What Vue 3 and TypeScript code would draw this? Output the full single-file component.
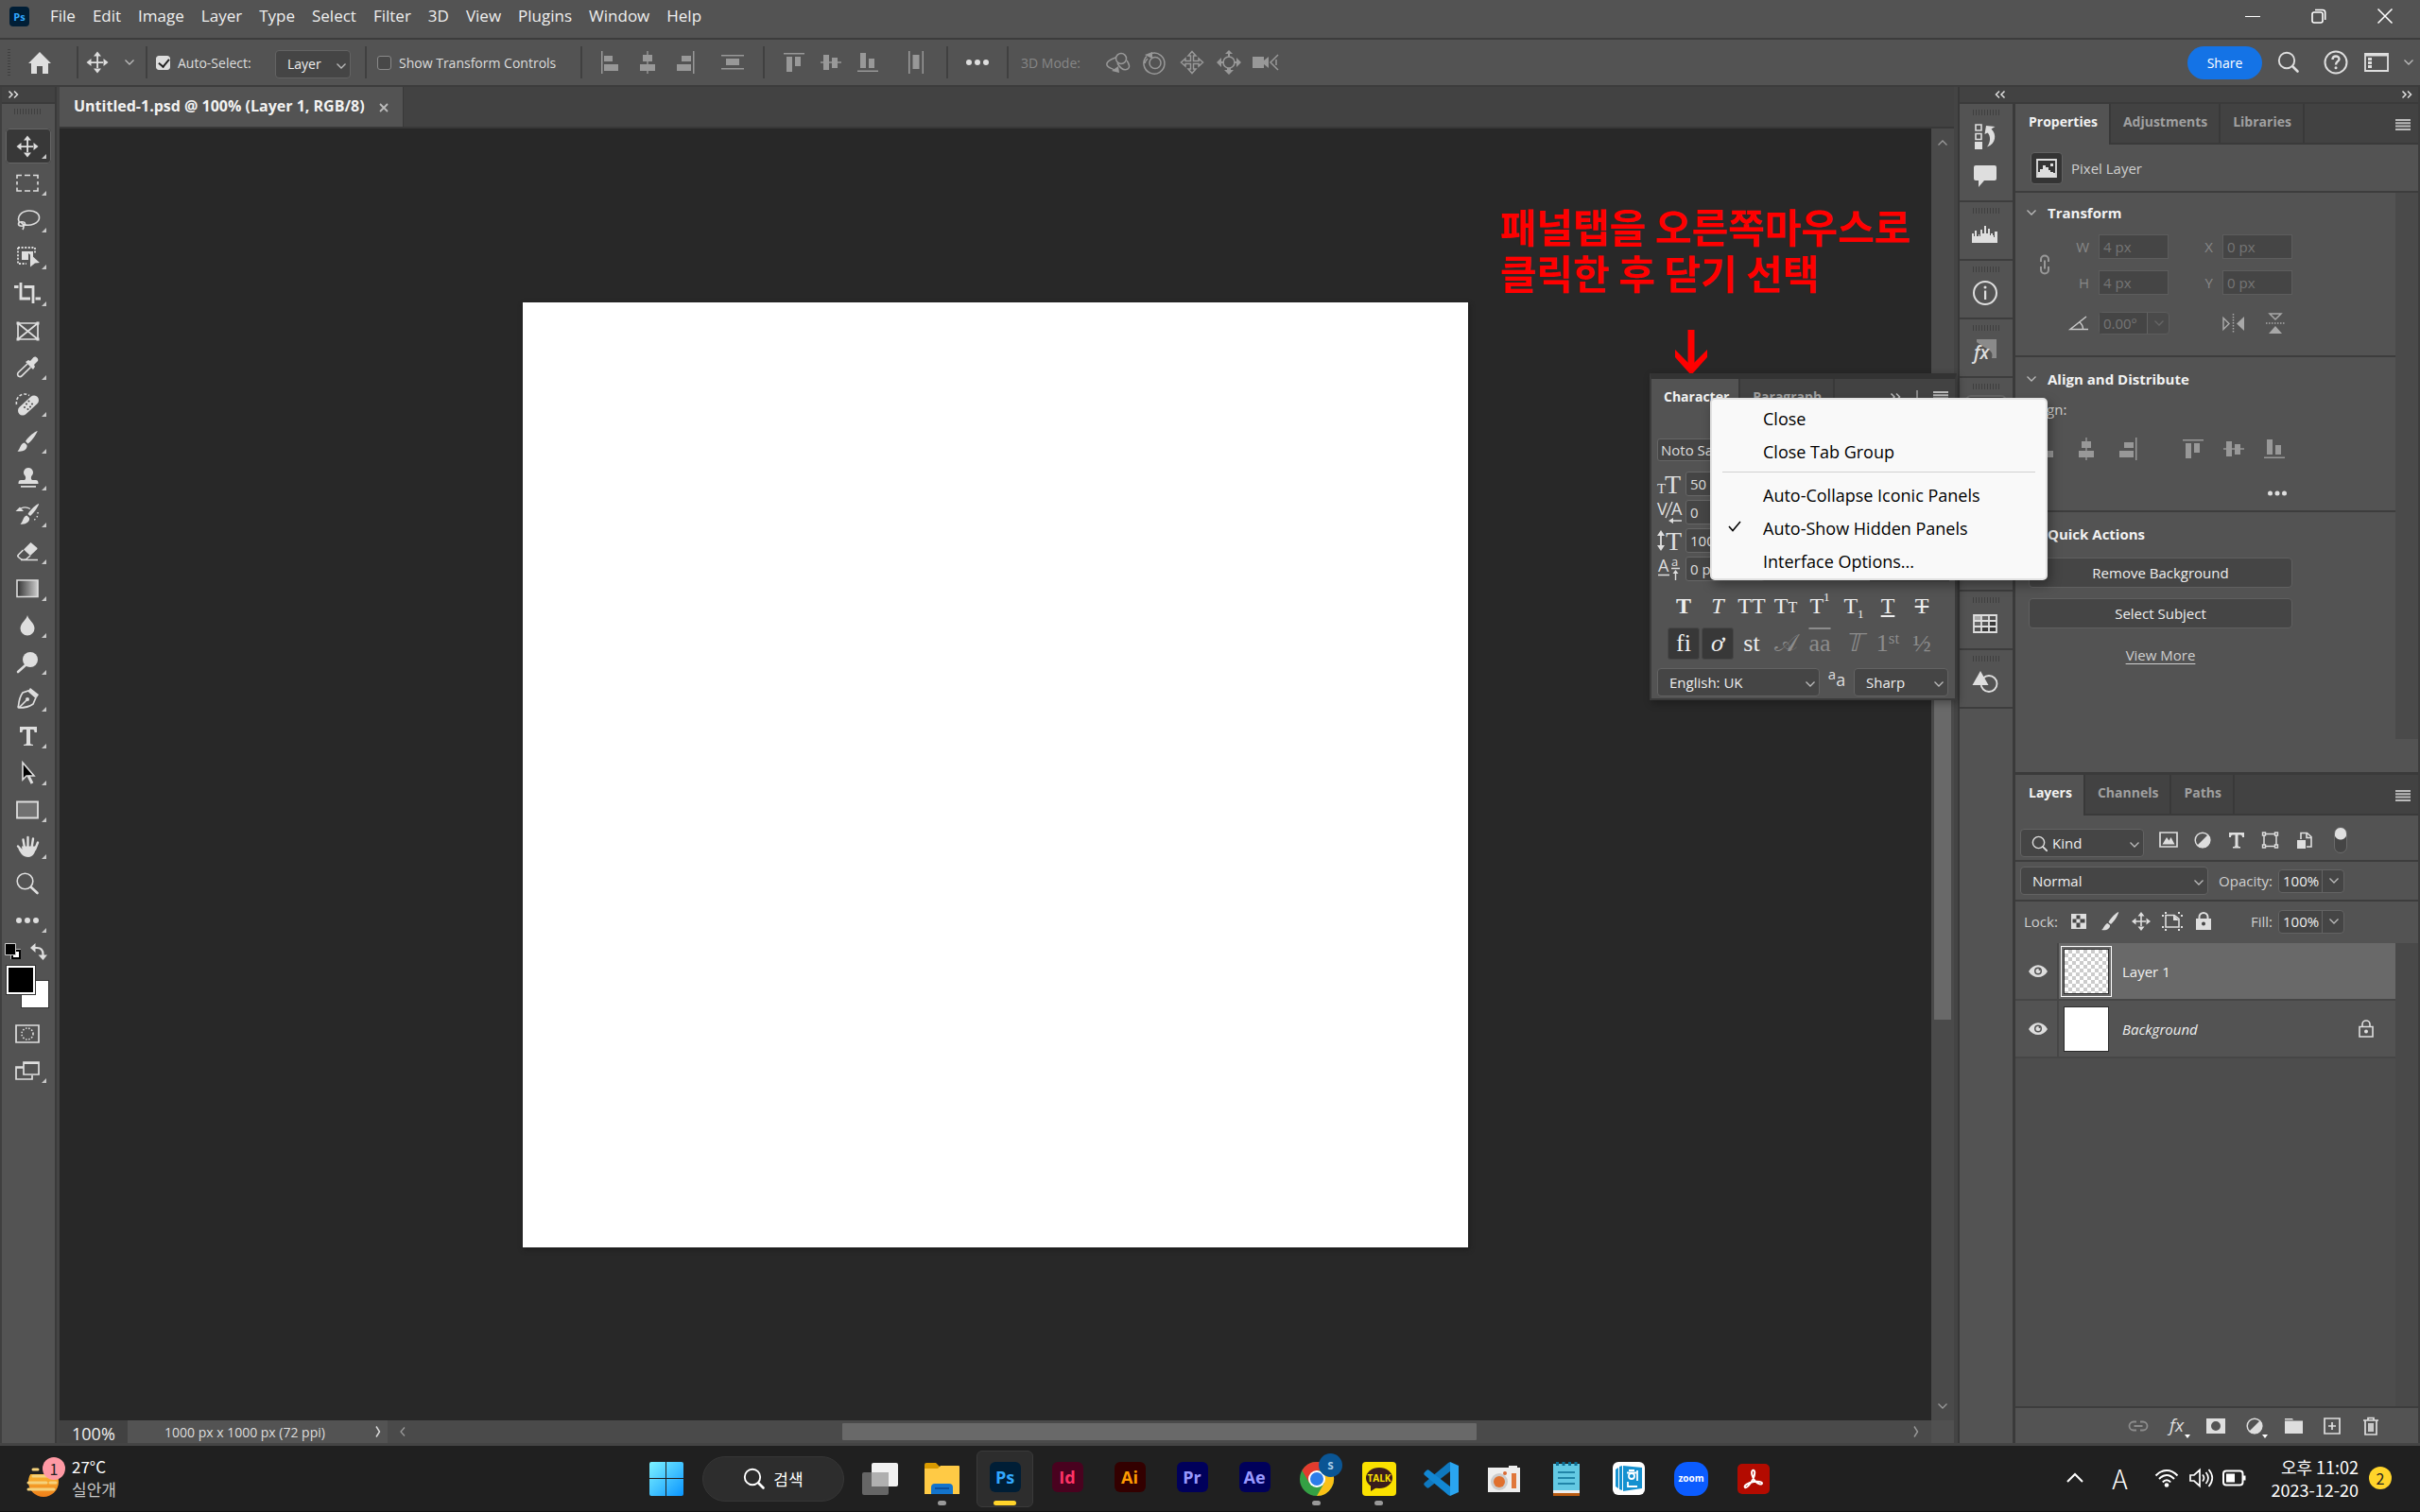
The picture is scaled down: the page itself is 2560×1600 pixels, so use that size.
<script setup lang="ts">
import { h, ref } from 'vue'

type IconDef = [number, number, string]

const S = 'fill="none" stroke="currentColor"'

const icons: Record<string, IconDef> = {
  // window and options bar
  home: [26, 24, '<path d="M13 1 25 13h-3v11h-6v-8h-6v8H4V13H1z"/>'],
  move: [28, 28, '<path d="M13.2 7h1.8v14h-1.8zM7 13.2h14V15H7zM14 2.500l4 5h-8zM14 25.500l4-5h-8zM2.500 14l5-4v8zM25.500 14l-5-4v8z"/>'],
  chev: [12, 8, `<path ${S} stroke-width="1.300" d="M1.500 1.500 6 6l4.500-4.500"/>`],
  chevUp: [12, 8, `<path ${S} stroke-width="1.300" d="M1.500 6.500 6 2l4.500 4.500"/>`],
  chevL: [8, 12, `<path ${S} stroke-width="1.300" d="M6 1.500 2 6l4 4.500"/>`],
  chevR: [8, 14, `<path ${S} stroke-width="1.400" d="M2 1.500 5.500 7 2 12.500"/>`],
  dblR: [12, 10, `<path ${S} stroke-width="1.500" d="M1.500 1.500 5 5 1.500 8.500M7 1.500 10.500 5 7 8.500"/>`],
  dblL: [12, 10, `<path ${S} stroke-width="1.500" d="M5 1.500 1.500 5 5 8.500M10.500 1.500 7 5l3.500 3.500"/>`],
  alL: [24, 24, '<path d="M2 0h1.500v24H2zM5 5h9v6H5zM5 14h15v7H5z"/>'],
  alC: [24, 24, '<path d="M11.300 0h1.400v24h-1.400zM7 4h10v7H7zM4 14h16v7H4z"/>'],
  alR: [24, 24, '<path d="M21 0h1.500v24H21zM9 5h10v6H9zM4 14h15v7H4z"/>'],
  dsV: [26, 24, '<path d="M1 4h24v1.600H1zM1 18h24v1.600H1zM6 8h14v7H6z"/>'],
  alT: [24, 24, '<path d="M1 2h22v1.600H1zM4 6h6v16H4zM13 6h6v10h-6z"/>'],
  alM: [24, 24, '<path d="M1 11.300h22v1.400H1zM4 4h6v16H4zM13 7h6v11h-6z"/>'],
  alB: [24, 24, '<path d="M1 20.500h22v1.600H1zM4 2h6v16H4zM13 8h6v10h-6z"/>'],
  dsH: [20, 24, '<path d="M2 0h1.600v24H2zM16.500 0H18v24h-1.500zM6.500 4h7v15h-7z"/>'],
  dots: [26, 8, '<circle cx="4" cy="4" r="3"/><circle cx="13" cy="4" r="3"/><circle cx="22" cy="4" r="3"/>'],
  dotsS: [22, 8, '<circle cx="3.500" cy="4" r="2.500"/><circle cx="11" cy="4" r="2.500"/><circle cx="18.500" cy="4" r="2.500"/>'],
  orbit: [28, 24, `<g ${S} stroke-width="1.500"><circle cx="17" cy="8" r="5.500"/><path d="M11 7C5 9 1 12 2 15c1 3 5 3 8 5M13 13c3 5 7 8 11 6 3-2 1-6-1-9"/></g><path d="m7 21 7-5 1 7z"/>`],
  roll: [26, 26, `<g ${S} stroke-width="1.500"><circle cx="13" cy="13.500" r="6"/><path d="M9 3.500a11 11 0 1 1-5 3M5 9a11 11 0 0 0-3 5"/></g><path d="M2 5 10 2v7z"/>`],
  pan: [26, 26, `<path ${S} stroke-width="1.500" d="m13 1.500 4 4.500h-2.500v5.500H20V9l4.500 4-4.500 4v-2.500h-5.500V20H17l-4 4.500L9 20h2.500v-5.500H6V17l-4.500-4L6 9v2.500h5.500V6H9z"/>`],
  slide: [28, 26, `<circle cx="14" cy="13" r="6" ${S} stroke-width="1.600"/><path d="m14 0 4 4h-3v3h-2V4h-3zM14 26l5-5h-3v-2h-4v2H9zM1 13l5-5v4h3v2H6v4zM27 13l-5-5v4h-3v2h3v4z"/>`],
  cam: [30, 24, `<path d="M1 6h12v4l5-4v12l-5-4v4H1z"/><path ${S} stroke-width="1.500" d="M28 4 20 12l8 8M26 9v6"/>`],
  search: [24, 24, `<circle cx="10" cy="10" r="8.200" ${S} stroke-width="1.900"/><path ${S} stroke-width="2.600" stroke-linecap="round" d="m16.500 16.500 5 5"/>`],
  help: [26, 26, `<circle cx="13" cy="13" r="11.500" ${S} stroke-width="2"/><path ${S} stroke-width="2.400" d="M9.500 10c0-4.500 7-4.500 7-.5 0 2.500-3.500 2.500-3.500 6"/><circle cx="13" cy="18.800" r="1.500"/>`],
  workspace: [26, 20, `<path ${S} stroke-width="1.800" d="M1 1h24v18H1z"/><path d="M1 1h24v2.500H1zM4 5h4v3H4zM4 9h4v3H4zM4 13h4v3H4z"/>`],
  min: [16, 16, '<path d="M0 8h16v1H0z"/>'],
  restore: [16, 16, `<g ${S} stroke-width="1.600"><rect x="1" y="4" width="11" height="11" rx="2"/><path d="M4 1.500h8q2.700 0 2.700 2.700V12"/></g>`],
  close: [16, 16, `<path ${S} stroke-width="1.500" d="m.5.5 15 15M15.500.5l-15 15"/>`],
  x: [10, 10, `<path ${S} stroke-width="1.800" d="m1 1 8 8M9 1 1 9"/>`],
  burger: [16, 12, '<path d="M0 0h16v2H0zM0 3.300h16v2H0zM0 6.600h16v2H0zM0 10h16v2H0z"/>'],
  // tools
  marquee: [28, 28, `<path ${S} stroke-width="1.600" d="M3 9V5.500h5M11 5.500h6M20 5.500h5V9M25 12v3.500M25 18.500v3.500h-5M17 22h-6M8 22H3v-3.500M3 15.500V12"/>`],
  lasso: [28, 28, `<g ${S} stroke-width="1.600"><path d="M6 17C2 11 7 4.500 15 4c7-.4 12 3 11.500 8-.6 5-9 9-17 6.500"/><ellipse cx="8" cy="18" rx="3.500" ry="2.200"/><path d="M7 16c3 2 4 5 2 8"/></g>`],
  objsel: [28, 28, `<path ${S} stroke-width="1.800" stroke-dasharray="2 1.600" d="M4 4h18v6M4 4v17h9"/><path d="M8 8h12v6l-5-4v7H8zM17 11l10 9-5 .5-5 4z"/>`],
  crop: [28, 28, `<path ${S} stroke-width="2.800" d="M7 2v17h10M10.500 6.500H20V24"/><path d="M0 5h4.500v3H0zM22.500 17.500H28v3h-5.500z"/>`],
  frame: [28, 28, `<path ${S} stroke-width="1.700" d="M4 6h21v17H4zM4 6l21 17M25 6 4 23"/><path d="M2.500 4.500h3v3h-3zM23.500 4.500h3v3h-3zM2.500 21.500h3v3h-3zM23.500 21.500h3v3h-3z"/>`],
  dropper: [28, 28, `<path ${S} stroke-width="1.700" d="m14 10-9.500 9c-1.500 1.500-1 4 1 4.500 1 .3 2-.1 2.700-.8L17.500 13.500"/><path d="m12 8 3-2 2 1 3.500-4c2-2 6 1.500 4.500 4L21 11l1 2-2 3z"/>`],
  heal: [28, 28, `<path stroke="currentColor" fill="none" stroke-width="10" stroke-linecap="round" d="m9 20.500 12-11"/><path ${S} stroke-width="1.600" stroke-dasharray="3 2" d="M2.500 14C1 6 9 0 16 4.500"/><g fill="#535353"><circle cx="13" cy="13.500" r="1.100"/><circle cx="17" cy="16.500" r="1.100"/><circle cx="11" cy="17" r="1.100"/><circle cx="14.500" cy="19" r="1.100"/><circle cx="15.500" cy="10.500" r="1.100"/><circle cx="19" cy="13.500" r="1.100"/></g>`],
  brush: [28, 28, '<path d="M24.500 3c1 0-5 10-10 13.500L12 14C15 9 22 3.500 24.500 3zM11 15.500l2.500 2.500c1 5-5 7.500-10 6.500 3-2 2.500-8 7.500-9z"/>'],
  stamp: [28, 28, '<path d="M15 3a5 5 0 0 1 3.500 8.500c-1 1.200-.8 3.500.5 4.500h4c2 0 2.500 1.500 2.500 4h-21c0-2.500.5-4 2.500-4h4c1.300-1 1.500-3.300.5-4.500A5 5 0 0 1 15 3zM7 22h16v1.800H7z"/>'],
  history: [28, 28, `<path d="M26 2c1 0-4 9-9 13l-2.500-2C17.500 8 23.500 2.500 26 2zM13.500 14.500l2.500 2.500c1 4.500-4.500 7.500-9.500 6.500 3-2 2.500-8 7-9zM1.500 10 6 5.500l4 4.500z"/><path ${S} stroke-width="1.300" d="M7 7c3-1.500 7-1.500 10 .5"/><path ${S} stroke-width="1.400" stroke-dasharray="1.500 2.500" d="M25 11c.5 4-2 8-6 9.500"/>`],
  eraser: [28, 28, `<path d="M17.500 4 24 9.500c.8.700.5 1.500 0 2L17 18l-7-6.500z"/><path ${S} stroke-width="1.600" d="m9.500 12-5 5c-1 1-1 1.500 0 2.500l2.500 2c1 1 5 .8 6 0l4-3.500M7 22.500h18"/>`],
  gradient: [28, 28, '<defs><linearGradient id="tg"><stop stop-color="#333"/><stop offset="1" stop-color="#ccc"/></linearGradient></defs><path fill="url(#tg)" stroke="currentColor" stroke-width="1.600" d="M3 5h22v17.500H3z"/>'],
  drop: [28, 28, '<path d="M14 3c1 5 7.500 8 7.500 14a7.500 7.500 0 0 1-15 0C6.500 11 13 8 14 3z"/>'],
  dodge: [28, 28, `<circle cx="17" cy="11" r="8"/><path ${S} stroke-width="2.600" stroke-linecap="round" d="m4 24 9-8"/>`],
  pen: [28, 28, `<path ${S} stroke-width="1.700" d="M15 5 23 12 20 19c-4 3-9 4-15 4-1 0-1-1-.5-2C5 16 6 11 9 7zM5 23l8-8"/><circle cx="14" cy="14" r="2"/><path d="m17 2 9 7-2 3-9-7z"/>`],
  type: [28, 28, '<path d="M6 4h18v6h-2.500c0-2-.5-3-2-3H17v14c0 1.500 1 1.500 3 2v1H10v-1c2-.5 3-.5 3-2V7h-2.500c-1.500 0-2 1-2 3H6z"/>'],
  arrow: [28, 28, '<path fill="#000" stroke="currentColor" stroke-width="1.600" d="M9 3v18l4-4h8z"/><path stroke="currentColor" stroke-width="3" d="m15 17 4 8"/>'],
  rect: [28, 28, '<path fill="#717171" stroke="currentColor" stroke-width="1.800" d="M3 5.500h22v17H3z"/>'],
  hand: [28, 28, `<path ${S} stroke-width="2.400" stroke-linecap="round" d="M4 13.500 8 18M9.500 6.500 11 15M14.500 4v11M20 5.500 18.500 15M25 9.500 22 17"/><path d="M8 13.500h15c0 6-3 11.500-8 11.500-6 0-8-4-10.500-8.500l1-1 3 2z"/>`],
  zoomT: [28, 28, `<circle cx="11.500" cy="11.500" r="8.300" ${S} stroke-width="1.600"/><path ${S} stroke-width="2.600" stroke-linecap="round" d="m18 18 6.500 6"/>`],
  more: [28, 28, '<circle cx="5" cy="14" r="3"/><circle cx="14" cy="14" r="3"/><circle cx="23" cy="14" r="3"/>'],
  defCol: [18, 18, '<path fill="#fff" stroke="#bbb" d="M6.500 6.500h10v10h-10z"/><path fill="none" stroke="#000" stroke-width="2" d="M8 8h8v8H8z"/><path fill="#000" stroke="#ccc" d="M.5.5h11v12H.5z"/>'],
  swap: [18, 18, `<path ${S} stroke-width="2.200" d="M4 5h3c4 0 6.500 2.500 6.500 7v1"/><path d="M0 5l5.500-5v10zM13.500 18l-5-5.500h9.500z"/>`],
  mask: [28, 22, `<path ${S} stroke-width="1.700" d="M2 2h24v18H2z"/><circle cx="14" cy="11" r="6" ${S} stroke-width="1.600" stroke-dasharray="1.500 1.700"/>`],
  screen: [28, 22, `<path ${S} stroke-width="1.700" d="M10 7H2v13h17v-4M10 2h16v13H10zM2 8h8"/><path d="M10 2h16v2H10z"/>`],
  // dock icons
  dHist: [26, 28, `<path ${S} stroke-width="1.600" d="M3 2h6v6H3zM3 11.500h6v6H3z"/><path d="M2 20h8v8H2zM14 3l9.500 1-4 2.500c6 5 5 16-4.500 19 4-5 4-12 .5-15l-3 1.500z"/>`],
  dNote: [26, 26, '<path d="M3 1h20q2 0 2 2v12q0 2-2 2H12l-6 7v-7H3q-2 0-2-2V3q0-2 2-2z"/>'],
  dHisto: [28, 18, '<path d="M0 18V8h2v3h1V5h2v6h2V9h1v2h1V4h2v4h2V0h2v8h2V3h2v7h1V8h2v2h1v2h1V6h3v12z"/>'],
  dInfo: [28, 28, `<circle cx="14" cy="14" r="12" ${S} stroke-width="2"/><path d="M13 11.500h2.200V21H13z"/><circle cx="14" cy="8" r="1.500"/>`],
  dFx: [28, 28, '<path fill="#8a8a8a" d="M5 1h21v20h-5c2-7-3-9-7-11L5 4z"/><text x="2" y="22" font-family="Open Sans, sans-serif" font-style="italic" font-weight="600" font-size="19">fx</text>'],
  dGrid: [26, 20, `<path fill="#aaa" d="M1 1h8v6H1z"/><path fill="#666" d="M9 1h8v6H9zM1 7h8v6H1z"/><path fill="#383838" d="M17 7h8v12H9v-6h8z"/><path ${S} stroke-width="1.800" d="M1 1h24v18H1zM9 1v18M17 1v18M1 7h24M1 13h24"/>`],
  dShape: [28, 24, `<circle cx="18" cy="13.500" r="8.500" ${S} stroke-width="1.800"/><path d="m9 0 8.500 15H.5z"/>`],
  dChar: [28, 28, `<path ${S} stroke-width="2" d="M2 26 10 4l8 22M5 18h10M22 0v28"/>`],
  // panels
  pixel: [22, 20, `<path ${S} stroke-width="1.800" d="M1 1h20v18H1z"/><path d="M2 18v-4h2v-3h3V7h3v2h3v3h2v2h3v1h2v3zM15 5h3v3h-3z"/>`],
  link: [14, 24, `<path ${S} stroke-width="2" d="M3 9V6.500a4 4 0 0 1 8 0V9M3 14v3.500a4 4 0 0 0 8 0V14M7 7.500v9"/>`],
  angle: [22, 16, `<path ${S} stroke-width="1.500" d="M19 1 2 14.500h19M12 7c2.500 2 3.500 5 3.500 7.500"/>`],
  flipH: [26, 20, `<path ${S} stroke-width="1.500" d="M2 4.500v12L8 10.500z"/><path d="M24 3v15l-8-7.500z"/><path ${S} stroke-width="1.500" stroke-dasharray="1.500 1.500" d="M12.500 0v20"/>`],
  flipV: [22, 24, `<path ${S} stroke-width="1.500" d="M5 2h12l-6 6z"/><path d="m11 15 7 8H4z"/><path ${S} stroke-width="1.500" stroke-dasharray="1.500 1.500" d="M1 12h20"/>`],
  fPix: [20, 18, `<path ${S} stroke-width="1.700" d="M1 1h18v15H1z"/><path d="M3.500 13.500 8 6l2.500 3.500L12.500 6l4 7.500z"/>`],
  fAdj: [18, 18, `<circle cx="9" cy="9" r="7.800" ${S} stroke-width="1.500"/><path d="M14.800 3.200A8.200 8.200 0 0 1 3.200 14.800z"/>`],
  fType: [18, 18, '<path d="M1 1h16v5h-2c0-1.500-.5-2.500-2-2.500h-2.500v11c0 1.500 1 1.500 2.500 1.500v1.500H5V16c1.500 0 2.500 0 2.500-1.500v-11H5C3.500 3.500 3 4.500 3 6H1z"/>'],
  fShape: [20, 18, `<path ${S} stroke-width="1.500" d="M3 2.500h13v13H3z"/><path fill="#535353" stroke="currentColor" stroke-width="1.400" d="M1.500 1h3v3h-3zM14.500 1h3v3h-3zM1.500 14h3v3h-3zM14.500 14h3v3h-3z"/>`],
  fSmart: [18, 18, `<path ${S} stroke-width="1.600" d="M5 8V1.500h6.500l4.500 4V16h-5M11 1.500v5h5"/><path d="M1 9h9v9H1z"/>`],
  lTrans: [18, 18, '<path d="M1 1h16v16H1z"/><path fill="#444" d="M6.500 2.500h4v4h-4zM2.500 6.500h4v4h-4zM10.500 6.500h5v4h-5zM6.500 10.500h4v5h-4z"/>'],
  lBrush: [20, 20, '<path d="M19 0c1 0-3 9-8 13L8.500 11C11 6 17 .5 19 0zM7.500 12l2.500 2c.5 4-4 6-9 5 2.500-1 3-6 6.500-7z"/>'],
  lMove: [20, 20, '<path d="M9.200 4h1.600v12H9.200zM4 9.200h12v1.600H4zM10 0l3.500 4.500h-7zM10 20l3.500-4.500h-7zM0 10l4.500-3.500v7zM20 10l-4.500-3.500v7z"/>'],
  lBoard: [22, 20, `<path ${S} stroke-width="1.600" d="M4 3.500h9l5 4V16H4z"/><path d="M12 3v6h6zM3 0h2v2H3zM0 3h2v2H0zM17 0h2v2h-2zM20 3h2v2h-2zM3 18h2v2H3zM0 15h2v2H0zM17 18h2v2h-2zM20 15h2v2h-2z"/>`],
  lLock: [16, 20, `<path d="M0 7h16v12H0z"/><path ${S} stroke-width="2" d="M3.500 8V5.500a4.500 4.500 0 0 1 9 0V8"/><circle cx="8" cy="12.500" r="2" fill="#444"/>`],
  eye: [20, 14, '<path d="M0 7c5-9 15-9 20 0-5 8-15 8-20 0z"/><circle cx="10" cy="6.500" r="4" fill="#535353"/><circle cx="10" cy="6.500" r="2.500"/><circle cx="11.500" cy="5" r="1" fill="#535353"/>'],
  lockO: [16, 20, `<path ${S} stroke-width="1.600" d="M1 7.500h14v10.500H1zM4 7.500V5a4 4 0 0 1 8 0v2.500"/><circle cx="8" cy="12.500" r="2"/>`],
  bLink: [22, 12, `<path ${S} stroke-width="1.800" d="M9 1.500H6a4.500 4.500 0 0 0 0 9h3M13 1.500h3a4.500 4.500 0 0 1 0 9h-3M6.500 6h9"/>`],
  bMask: [20, 16, '<path fill-rule="evenodd" d="M0 0h20v16H0zM10 3a5 5 0 1 0 0 10 5 5 0 0 0 0-10z"/>'],
  bFolder: [20, 16, '<path d="M1 0h8l1 1.500H1zM1 2.500h19V16H1z"/>'],
  bNew: [18, 18, `<path ${S} stroke-width="1.700" d="M1 1h16v16H1zM9 5v8M5 9h8"/>`],
  bTrash: [18, 20, `<path ${S} stroke-width="1.700" d="M1 4h16M6 4V1.500h6V4M3 4v15h12V4M7 7v9M9 7v9M11 7v9"/>`],
  // character panel
  cSize: [26, 22, '<g font-family="Liberation Serif, serif"><text x="0" y="21" font-size="15">T</text><text x="8" y="21" font-size="28">T</text></g>'],
  cTrack: [28, 24, `<g font-family="Open Sans, sans-serif" font-size="18"><text x="0" y="15">V</text><text x="15" y="15">A</text></g><path ${S} stroke-width="1.400" d="M16 1 9 18M14 21h12"/><path d="m12 21 5-3v6z"/>`],
  cVert: [28, 22, `<text x="9" y="21" font-size="28" font-family="Liberation Serif, serif">T</text><path ${S} stroke-width="1.800" d="M4 4v14"/><path d="m4 0 4 6H0zM4 22l4-6H0z"/>`],
  cBase: [26, 24, `<g font-family="Open Sans, sans-serif"><text x="1" y="15" font-size="18">A</text><text x="15" y="9" font-size="13">a</text></g><path ${S} stroke-width="1.400" d="M1 18.500h12M15 11.500h9M19.500 15v9"/><path d="m19.500 13 3 4h-6z"/>`],
  check: [14, 12, `<path ${S} stroke-width="1.500" d="m1 6 4 4.500 8-9.500"/>`],
  // taskbar
  win: [36, 36, '<defs><linearGradient id="wg" x2="1" y2="1"><stop stop-color="#7df3ff"/><stop offset="1" stop-color="#0a95ff"/></linearGradient></defs><path fill="url(#wg)" d="M2 0h15v17H0V2q0-2 2-2zM18 0h16q2 0 2 2v15H18zM0 18h17v18H2q-2 0-2-2zM18 18h18v16q0 2-2 2H18z"/>'],
  tview: [38, 34, '<rect y="10" width="28" height="24" rx="2" fill="#666"/><rect x="10" width="28" height="25" rx="2" fill="#f2f2f2"/><path fill="#b0b0b0" d="M10 10h18v15H10z"/>'],
  folder: [38, 34, '<path fill="#d99a00" d="M2 0h10l4 4v8H0V2q0-2 2-2z"/><path fill="#ffca45" d="M0 6h14l3-3h19q1 0 1 1v29H0z"/><path fill="#1374cc" d="M7 33v-7q0-4 4-4h15q4 0 4 4v7z"/><path fill="#0b4f9c" d="M11 26h15v2H11z"/>'],
  chrome: [36, 36, '<circle cx="18" cy="18" r="18" fill="#34a044"/><path fill="#e33b2e" d="M2.400 9A18 18 0 0 1 33.600 9H18L10 22z"/><path fill="#fbc116" d="M33.600 9A18 18 0 0 1 18 36l8-14V9z"/><circle cx="18" cy="18" r="9" fill="#fff"/><circle cx="18" cy="18" r="7" fill="#2b7de9"/>'],
  talk: [36, 36, '<rect width="36" height="36" rx="4" fill="#fae100"/><ellipse cx="18" cy="17" rx="14" ry="11" fill="#3a1d1d"/><path fill="#3a1d1d" d="M9 24v7l8-5z"/><text x="18" y="21" text-anchor="middle" font-family="Open Sans, sans-serif" font-weight="700" font-size="10" fill="#fae100">TALK</text>'],
  vscode: [36, 36, '<path fill="#0f78bf" d="M27 0v10L5 27c-1 1-2 1-3 0l-2-2c-1-1-1-2 0-3L25 1z"/><path fill="#1287d3" d="m27 36-2-1L0 14c-1-1-1-2 0-3l2-2c1-1 2-1 3 0l22 17z"/><path fill="#2aa5f0" d="m27 0 9 4v28l-9 4z"/>'],
  cap: [34, 28, '<path fill="#eee" d="M0 2h22V0h9v2h3v26H0z"/><circle cx="12" cy="17" r="9" fill="#ccc"/><circle cx="12" cy="17" r="6" fill="#e0702e"/><circle cx="18" cy="8" r="2" fill="#d86b35"/><path fill="#e0783c" d="M25 8h5v16h-5z"/>'],
  note: [30, 36, '<path fill="#63c9e3" d="M1 2h28v28H1z"/><path fill="#eee" d="M1 30h28v3H1z"/><path fill="#b85a10" d="M1 33h28v3H1z"/><g stroke="#0c6f95" stroke-width="1.600"><path d="M6 11h18M6 17h18M6 23h18"/><path stroke-width="3" d="M5.500 0v4M12 0v4M18.500 0v4M25 0v4"/></g>'],
  hwp: [36, 36, `<rect x="1" width="34" height="35" rx="6" fill="#fff"/><path fill="#1591d0" d="m4 8 3-2v22l-3-2zM8 5l3-1v26l-3-1zM12 4l20 2v22l-20 3z"/><g fill="none" stroke="#fff" stroke-width="1.800"><circle cx="21" cy="15" r="3"/><path d="M18 9h6M16 11.500h10M27 9v11M17 21v5h10"/></g>`],
  zoomA: [36, 36, '<rect width="36" height="36" rx="14" fill="#0b5cff"/><text x="18" y="21" text-anchor="middle" font-family="Open Sans, sans-serif" font-weight="700" font-size="10" fill="#fff">zoom</text>'],
  pdf: [34, 32, '<rect width="34" height="32" rx="5" fill="#b30b00"/><path fill="none" stroke="#fff" stroke-width="2" d="M16 7c3-1 3 4 0 10-3 5-6 9-8 8-2-2 4-5 9-6 5-.8 9 0 9 1.500 0 2-5 1-8-3-2.500-4-4-9-2-10.500z"/>'],
  weather: [36, 36, '<defs><linearGradient id="sg" x2="0" y2="1"><stop stop-color="#fcc73a"/><stop offset="1" stop-color="#ef7f1a"/></linearGradient></defs><circle cx="18" cy="18" r="16" fill="url(#sg)"/><path fill="#202020" d="M0 0h36v10H0z"/><path stroke="#f5d27c" stroke-width="3" stroke-linecap="round" d="M7 5h5M7 12h28M2 19h19M25 19h6M2 26h27"/>'],
  up: [18, 12, `<path ${S} stroke-width="2" d="m1 10 8-8 8 8"/>`],
  wifi: [26, 20, `<path ${S} stroke-width="2" d="M1.500 7.500c7-7.500 16-7.500 23 0M5 11c5-5.500 11-5.500 16 0M8.800 14.500c2.500-3 6-3 8.400 0"/><circle cx="13" cy="17.500" r="2.300"/>`],
  vol: [26, 20, `<path ${S} stroke-width="1.700" d="M2 7h4l6-5.500v17L6 13H2zM15 6.500q3 3.500 0 7M18.500 4q5 6 0 12M21.500 1q7.500 9 0 18"/>`],
  bat: [26, 18, `<rect x="1" y="1.500" width="20.500" height="15" rx="3" ${S} stroke-width="2"/><path d="M4 4.500h9v9H4zM22 6.500h2.500v5H22z"/>`],
  redArrow: [34, 48, `<path ${S} stroke-width="7" d="M17 0v42"/><path d="m17 48-17-19v-8l17 17 17-17v8z"/>`],
}

const Ic = (p: { n: string }) => {
  const [w, ht, markup] = icons[p.n]
  return h('svg', { width: w, height: ht, viewBox: `0 0 ${w} ${ht}`, fill: 'currentColor', 'aria-hidden': 'true', innerHTML: markup })
}
Ic.props = ['n']

const menus = ['File', 'Edit', 'Image', 'Layer', 'Type', 'Select', 'Filter', '3D', 'View', 'Plugins', 'Window', 'Help']
const tools = ['move', 'marquee', 'lasso', 'objsel', 'crop', 'frame', 'dropper', 'heal', 'brush', 'stamp', 'history', 'eraser',
  'gradient', 'drop', 'dodge', 'pen', 'type', 'arrow', 'rect', 'hand', 'zoomT', 'more']
const noFlyout = ['frame', 'zoomT']
const dock = [['dHist', 'dNote'], ['dHisto'], ['dInfo'], ['dFx']]
const fields = [
  { icon: 'cSize', label: 'Font size', value: '50 px' },
  { icon: 'cTrack', label: 'Tracking', value: '0' },
  { icon: 'cVert', label: 'Vertical scale', value: '100%' },
  { icon: 'cBase', label: 'Baseline shift', value: '0 px' },
]
const autoSelect = ref(true)
const showTransform = ref(false)
const adobe = [
  { t: 'Ps', bg: '#001e36', fg: '#31a8ff', on: true },
  { t: 'Id', bg: '#49021f', fg: '#ff3366' },
  { t: 'Ai', bg: '#330000', fg: '#ff9a00' },
  { t: 'Pr', bg: '#00005b', fg: '#9999ff' },
  { t: 'Ae', bg: '#00005b', fg: '#9999ff' },
]
const apps = ['vscode', 'cap', 'note', 'hwp', 'zoomA', 'pdf']
</script>

<template>
  <div class="screen">
    <header class="menubar">
      <span class="ps-mini">Ps</span>
      <nav class="menus"><button v-for="m in menus" :key="m">{{ m }}</button></nav>
      <div class="winctl">
        <button aria-label="Minimize"><Ic n="min" /></button>
        <button aria-label="Restore"><Ic n="restore" /></button>
        <button aria-label="Close window"><Ic n="close" /></button>
      </div>
    </header>

    <div class="options">
      <i class="vgrip"></i>
      <button class="home" aria-label="Home"><Ic n="home" /></button>
      <i class="vsep"></i>
      <button class="movebtn" aria-label="Move tool"><Ic n="move" /><Ic n="chev" /></button>
      <i class="vsep"></i>
      <label class="chk c1"><input v-model="autoSelect" type="checkbox" />Auto-Select:</label>
      <span class="sel s-layer"><select aria-label="Auto-select target"><option>Layer</option></select><Ic n="chev" /></span>
      <i class="vsep"></i>
      <label class="chk c2"><input v-model="showTransform" type="checkbox" />Show Transform Controls</label>
      <i class="vsep"></i>
      <div class="algroup g1">
        <button aria-label="Align left edges"><Ic n="alL" /></button>
        <button aria-label="Align horizontal centers"><Ic n="alC" /></button>
        <button aria-label="Align right edges"><Ic n="alR" /></button>
        <button class="wide" aria-label="Distribute vertically"><Ic n="dsV" /></button>
      </div>
      <i class="vsep"></i>
      <div class="algroup g2">
        <button aria-label="Align top edges"><Ic n="alT" /></button>
        <button aria-label="Align vertical centers"><Ic n="alM" /></button>
        <button aria-label="Align bottom edges"><Ic n="alB" /></button>
        <button class="wide" aria-label="Distribute horizontally"><Ic n="dsH" /></button>
      </div>
      <i class="vsep"></i>
      <button class="optmore" aria-label="More align options"><Ic n="dots" /></button>
      <i class="vsep"></i>
      <span class="mode3d">3D Mode:</span>
      <div class="algroup">
        <button v-for="n in ['orbit', 'roll', 'pan', 'slide', 'cam']" :key="n" :aria-label="n"><Ic :n="n" /></button>
      </div>
      <div class="optright">
        <button class="share">Share</button>
        <button class="wsearch" aria-label="Search"><Ic n="search" /></button>
        <button aria-label="Help"><Ic n="help" /></button>
        <button aria-label="Workspace"><Ic n="workspace" /></button>
        <button class="wchev" aria-label="Workspace menu"><Ic n="chev" /></button>
      </div>
    </div>

    <main class="work">
      <aside class="tools">
        <div class="strip"><Ic n="dblR" /></div>
        <i class="hgrip"></i>
        <div class="toollist">
          <button v-for="t in tools" :key="t" :class="{ active: t === 'move' }" :aria-label="t">
            <Ic :n="t" /><i v-if="!noFlyout.includes(t)" class="fly"></i>
          </button>
        </div>
        <div class="colrow"><Ic n="defCol" /><Ic n="swap" /></div>
        <div class="swatches"><i class="bg"></i><i class="fg"></i></div>
        <button class="tl" aria-label="Quick mask"><Ic n="mask" /></button>
        <button class="tl" aria-label="Screen mode"><Ic n="screen" /><i class="fly"></i></button>
      </aside>

      <section class="doc">
        <div class="doctabs"><div class="doctab"><span>Untitled-1.psd @ 100% (Layer 1, RGB/8)</span><button aria-label="Close document"><Ic n="x" /></button></div></div>
        <div class="stage">
          <div class="canvas"><div class="artboard"></div></div>
          <div class="vscroll"><Ic n="chevUp" /><i class="vthumb"></i><Ic n="chev" /></div>
        </div>
        <div class="status">
          <input class="zoomin" aria-label="Zoom" value="100%" />
          <div class="info"><span>1000 px x 1000 px (72 ppi)</span><Ic n="chevR" /></div>
          <div class="hscroll"><Ic n="chevL" /><i class="hthumb"></i><Ic class="hr" n="chevR" /></div>
          <i class="corner"></i>
        </div>
      </section>

      <section class="dock">
        <div class="strip dstrip"><Ic n="dblL" /><Ic n="dblR" /></div>
        <div class="dockbody">
          <div class="iconcol">
            <div v-for="(g, i) in dock" :key="i" class="igroup"><i class="hgrip"></i><button v-for="n in g" :key="n" :aria-label="n"><Ic :n="n" /></button></div>
            <div class="igroup tall"><i class="hgrip"></i><button class="on" aria-label="Character"><Ic n="dChar" /></button></div>
            <div class="igroup"><i class="hgrip"></i><button aria-label="Swatches"><Ic n="dGrid" /></button></div>
            <div class="igroup"><i class="hgrip"></i><button aria-label="Shapes"><Ic n="dShape" /></button></div>
          </div>

          <div class="panels">
            <section class="panel">
              <div class="tabs"><button class="on">Properties</button><button>Adjustments</button><button>Libraries</button><Ic class="burger" n="burger" /></div>
              <div class="kindrow"><span class="kicon"><Ic n="pixel" /></span>Pixel Layer</div>
              <div class="props">
                <div class="propmain">
                  <div class="sec first">
                    <h3><Ic n="chev" />Transform</h3>
                    <div class="xform">
                      <Ic class="lk" n="link" />
                      <label for="fw">W</label><input id="fw" disabled value="4 px" />
                      <label for="fx">X</label><input id="fx" disabled value="0 px" />
                      <label for="fh">H</label><input id="fh" disabled value="4 px" />
                      <label for="fy">Y</label><input id="fy" disabled value="0 px" />
                      <Ic class="ang" n="angle" />
                      <span class="combo off"><input aria-label="Angle" disabled value="0.00º" /><Ic n="chev" /></span>
                      <span class="flips"><Ic n="flipH" /><Ic n="flipV" /></span>
                    </div>
                  </div>
                  <div class="sec">
                    <h3><Ic n="chev" />Align and Distribute</h3>
                    <div class="alabel">Align:</div>
                    <div class="arow">
                      <button v-for="n in ['alL', 'alC', 'alR', 'alT', 'alM', 'alB']" :key="n" :class="{ gap: n === 'alT' }" :aria-label="n"><Ic :n="n" /></button>
                    </div>
                    <div class="adots"><Ic n="dotsS" /></div>
                  </div>
                  <div class="sec last">
                    <h3><Ic n="chev" />Quick Actions</h3>
                    <div class="qa"><button>Remove Background</button><button>Select Subject</button><a href="#">View More</a></div>
                  </div>
                </div>
                <i class="ptrack"></i>
              </div>
            </section>

            <section class="panel">
              <div class="tabs"><button class="on">Layers</button><button>Channels</button><button>Paths</button><Ic class="burger" n="burger" /></div>
              <div class="lrow r1">
                <span class="sel s-kind"><Ic class="mag" n="search" /><select aria-label="Filter kind"><option>Kind</option></select><Ic n="chev" /></span>
                <button v-for="n in ['fPix', 'fAdj', 'fType', 'fShape', 'fSmart']" :key="n" :aria-label="n"><Ic :n="n" /></button>
                <i class="toggle"></i>
              </div>
              <div class="lrow r2">
                <span class="sel s-blend"><select aria-label="Blend mode"><option>Normal</option></select><Ic n="chev" /></span>
                <label class="flab" for="op">Opacity:</label><span class="combo"><input id="op" value="100%" /><Ic n="chev" /></span>
              </div>
              <div class="lrow r3">
                <span class="lk">Lock:</span>
                <button v-for="n in ['lTrans', 'lBrush', 'lMove', 'lBoard', 'lLock']" :key="n" :aria-label="n"><Ic :n="n" /></button>
                <label class="flab" for="fi">Fill:</label><span class="combo"><input id="fi" value="100%" /><Ic n="chev" /></span>
              </div>
              <div class="llist">
                <div class="lmain">
                  <div class="layer cur"><span class="eye"><Ic n="eye" /></span><span class="lbody"><i class="thumb chkr"></i>Layer 1</span></div>
                  <div class="layer"><span class="eye"><Ic n="eye" /></span><span class="lbody"><i class="thumb"></i><em>Background</em><Ic class="lko" n="lockO" /></span></div>
                </div>
                <i class="ptrack full"></i>
              </div>
              <div class="lfoot">
                <button class="dim" aria-label="Link layers"><Ic n="bLink" /></button>
                <button class="fx" aria-label="Layer style">fx<i class="dn"></i></button>
                <button aria-label="Add mask"><Ic n="bMask" /></button>
                <button aria-label="New adjustment layer"><Ic n="fAdj" /><i class="dn"></i></button>
                <button aria-label="New group"><Ic n="bFolder" /></button>
                <button aria-label="New layer"><Ic n="bNew" /></button>
                <button aria-label="Delete layer"><Ic n="bTrash" /></button>
              </div>
            </section>
          </div>
        </div>
      </section>
    </main>

    <footer class="taskbar">
      <div class="weather">
        <span class="wicon"><Ic n="weather" /><b>1</b></span>
        <span class="wtext"><span>27°C</span><span class="w2">실안개</span></span>
      </div>
      <div class="apps">
        <button class="app" aria-label="Start"><Ic n="win" /></button>
        <button class="pill"><Ic n="search" />검색</button>
        <button class="app" aria-label="Task view"><Ic n="tview" /></button>
        <button class="app run" aria-label="Explorer"><Ic n="folder" /></button>
        <button v-for="a in adobe" :key="a.t" class="app" :class="{ sel2: a.on }"><span class="ad" :style="{ background: a.bg, color: a.fg }">{{ a.t }}</span></button>
        <button class="app run" aria-label="Chrome"><Ic n="chrome" /><b class="cbadge">s</b></button>
        <button class="app run" aria-label="KakaoTalk"><Ic n="talk" /></button>
        <button v-for="a in apps" :key="a" class="app" :aria-label="a"><Ic :n="a" /></button>
      </div>
      <div class="tray">
        <Ic n="up" /><span class="ime">A</span>
        <span class="sys"><Ic n="wifi" /><Ic n="vol" /><Ic n="bat" /></span>
        <span class="clock"><span>오후 11:02</span><span>2023-12-20</span></span>
        <b class="count">2</b>
      </div>
    </footer>

    <p class="note">패널탭을 오른쪽마우스로<br />클릭한 후 닫기 선택</p>
    <Ic class="redarrow" n="redArrow" />

    <section class="charpanel">
      <div class="tabs ctabs"><button class="on">Character</button><button>Paragraph</button><span class="cctl"><Ic n="dblR" /><i></i><Ic n="burger" /></span></div>
      <div class="cbody">
        <input class="cfont" aria-label="Font family" value="Noto Sans" />
        <div class="cfields">
          <label v-for="f in fields" :key="f.icon"><span><Ic :n="f.icon" /></span><input :aria-label="f.label" :value="f.value" /></label>
          <i class="ccolor"></i>
        </div>
        <div class="trow">
          <button><b>T</b></button><button><em>T</em></button><button>TT</button><button>T<small>T</small></button>
          <button>T<sup>1</sup></button><button>T<sub>1</sub></button><button><u>T</u></button><button><s>T</s></button>
        </div>
        <div class="trow ot">
          <button class="on">fi</button><button class="on"><em>ơ</em></button><button>st</button>
          <button class="dim"><span>&#x1D49C;</span></button><button class="dim over">aa</button><button class="dim"><em>&#x1D54B;</em></button>
          <button class="dim">1<sup>st</sup></button><button class="dim">½</button>
        </div>
        <div class="clang">
          <span class="sel s-lang"><select aria-label="Language"><option>English: UK</option></select><Ic n="chev" /></span>
          <span class="aa"><sup>a</sup>a</span>
          <span class="sel s-aa"><select aria-label="Anti-aliasing"><option>Sharp</option></select><Ic n="chev" /></span>
        </div>
      </div>
    </section>

    <div class="ctx" role="menu">
      <button role="menuitem">Close</button>
      <button role="menuitem">Close Tab Group</button>
      <hr />
      <button role="menuitem">Auto-Collapse Iconic Panels</button>
      <button role="menuitem"><Ic n="check" />Auto-Show Hidden Panels</button>
      <button role="menuitem">Interface Options...</button>
    </div>
  </div>
</template>

<style>
html, body { background: #202020; overflow: hidden; }
</style>

<style scoped>
.screen { position: relative; display: flex; flex-direction: column; height: 100vh; overflow: hidden; background: #535353; color: #dedede; font-family: "Open Sans", "Noto Sans CJK KR", sans-serif; font-size: 15px; }
.screen * { box-sizing: border-box; }
button { padding: 0; border: 0; background: none; color: inherit; font: inherit; display: flex; align-items: center; justify-content: center; flex: none; }
svg { display: block; flex: none; overflow: visible; }
i { display: block; flex: none; }
input, select { font: inherit; color: inherit; background: #454545; border: 1px solid #666; outline: 0; border-radius: 0; min-width: 0; }
em { font-style: italic; }

.menubar { height: 42px; flex: none; display: flex; align-items: flex-start; padding-left: 10px; border-bottom: 2px solid #3c3c3c; }
.ps-mini { width: 21px; height: 21px; margin-top: 7px; border-radius: 4px; background: #001e36; color: #31a8ff; font-weight: 700; font-size: 11px; line-height: 21px; text-align: center; }
.menus { display: flex; gap: 18px; margin-left: 22px; height: 33px; font-size: 17px; color: #efefef; }
.winctl { margin-left: auto; display: flex; height: 33px; padding-right: 2px; color: #fff; }
.winctl button { width: 70px; }

.options { height: 50px; flex: none; display: flex; align-items: center; border-bottom: 2px solid #3c3c3c; font-size: 14px; }
.vgrip { width: 3px; height: 28px; margin-left: 8px; background: repeating-linear-gradient(#3f3f3f 0 1px, #535353 1px 3px); }
.vsep { width: 2px; height: 34px; background: #404040; }
.home { width: 70px; padding-right: 8px; }
.movebtn { width: 71px; gap: 14px; padding-right: 6px; }
.movebtn svg + svg, .wchev { color: #bbb; }
.chk { display: flex; align-items: center; gap: 8px; padding-left: 9px; white-space: nowrap; }
.c1 { width: 135px; }
.c2 { width: 226px; padding-left: 11px; }
.chk input { appearance: none; position: relative; flex: none; width: 15px; height: 15px; margin: 0; border: 1px solid #8a8a8a; border-radius: 3px; background: #484848; }
.chk input:checked { background: #dedede; border-color: #dedede; }
.chk input:checked::after { content: ""; position: absolute; left: 4px; top: 0; width: 5px; height: 9px; border: solid #222; border-width: 0 2px 2px 0; transform: rotate(40deg); }
.sel { display: flex; align-items: center; position: relative; height: 30px; flex: none; }
.sel select { appearance: none; width: 100%; height: 100%; padding: 0 22px 0 12px; border-radius: 4px; border-color: #636363; color: #efefef; }
.sel > svg:last-child { position: absolute; right: 4px; top: 13px; color: #bbb; pointer-events: none; }
.s-layer { width: 80px; margin: 3px 15px 0 0; }
.algroup { display: flex; align-items: center; color: #989898; }
.algroup button { width: 39px; }
.g1 { padding-left: 10px; width: 191px; }
.g1 .wide { margin-left: 12px; }
.g2 { padding-left: 11px; width: 192px; }
.g2 .wide { margin-left: 12px; }
.optmore { width: 62px; }
.mode3d { width: 96px; padding-left: 13px; color: #878787; }
.optright { margin-left: auto; display: flex; align-items: center; height: 100%; padding-right: 2px; }
.optright button { width: 43px; }
.optright .wsearch { width: 56px; }
.optright .share { width: 79px; height: 35px; border-radius: 18px; background: #1473e6; color: #fff; }
.optright .wchev { width: 21px; margin-left: 2px; }

.work { flex: 1; min-height: 0; display: flex; padding-bottom: 3px; background: #444; }
.strip { height: 18px; flex: none; display: flex; align-items: center; background: #424242; border-bottom: 2px solid #3a3a3a; }
.hgrip { width: 28px; height: 6px; background: repeating-linear-gradient(90deg, #3f3f3f 0 1px, #535353 1px 3px); }
.tools { width: 60px; flex: none; background: #535353; border-left: 2px solid #3f3f3f; border-right: 2px solid #3a3a3a; display: flex; flex-direction: column; }
.tools .strip { padding-left: 6px; }
.tools .hgrip { margin: 5px 0 15px 13px; }
.toollist { display: flex; flex-direction: column; gap: 2px; }
.toollist button, .tl { position: relative; width: 48px; height: 37px; margin-left: 4px; padding-right: 2px; }
.toollist .active { background: #383838; outline: 1px solid #666; outline-offset: -1px; border-radius: 4px; }
.fly { position: absolute; right: 5px; bottom: 5px; width: 0; height: 0; border-left: 5px solid transparent; border-bottom: 5px solid #c8c8c8; }
.colrow { display: flex; justify-content: space-between; padding: 6px 8px 0 3px; height: 30px; }
.swatches { display: grid; grid-template-columns: 15px 15px 15px; grid-template-rows: 15px 15px 15px; margin: 0 0 8px 5px; }
.swatches .fg { grid-area: 1 / 1 / 3 / 3; background: #000; border: 2px solid #fff; outline: 1px solid #333; z-index: 1; }
.swatches .bg { grid-area: 2 / 2 / 4 / 4; background: #fff; border: 1px solid #333; }
.tl { margin-bottom: 2px; }

.doc { flex: 1; min-width: 0; display: flex; flex-direction: column; margin-left: 3px; margin-right: 4px; }
.doctabs { height: 44px; flex: none; background: #424242; border-bottom: 2px solid #383838; }
.doctab { width: 364px; height: 42px; display: flex; align-items: center; gap: 15px; padding: 0 0 2px 15px; background: #535353; border-right: 1px solid #383838; font-weight: 700; font-size: 16px; color: #f2f2f2; white-space: nowrap; }
.doctab button { color: #bbb; padding-top: 4px; }
.stage { flex: 1; min-height: 0; display: flex; }
.canvas { flex: 1; display: flex; align-items: center; justify-content: center; background: #282828; }
.artboard { width: 1000px; height: 1000px; background: #fff; box-shadow: 1px 2px 5px #1c1c1c; }
.vscroll { width: 24px; background: #4a4a4a; display: flex; flex-direction: column; align-items: center; justify-content: space-between; padding: 11px 0; color: #999; }
.vthumb { width: 18px; flex: 0 1 561px; margin: 0 0 42px; background: #696969; }
.status { height: 24px; flex: none; display: flex; background: #4a4a4a; }
.zoomin { width: 72px; height: 24px; border: 0; padding: 3px 0 0 13px; font-size: 18px; color: #f0f0f0; background: #424242; }
.info { width: 275px; display: flex; align-items: center; justify-content: space-between; padding: 0 6px 0 39px; background: #535353; font-size: 14px; }
.hscroll { flex: 1; display: flex; align-items: center; padding: 0 12px; color: #999; }
.hthumb { width: 671px; height: 18px; margin-left: 461px; background: #696969; border-radius: 1px; }
.hr { margin-left: auto; }
.corner { width: 24px; background: #505050; }

.dock { width: 489px; flex: none; display: flex; flex-direction: column; border-left: 2px solid #383838; border-right: 2px solid #3c3c3c; }
.dstrip { justify-content: space-between; padding: 0 6px 0 37px; }
.dockbody { flex: 1; min-height: 0; display: flex; background: #3a3a3a; gap: 3px; }
.iconcol { width: 56px; background: #535353; }
.igroup { min-height: 62px; display: flex; flex-direction: column; align-items: center; border-bottom: 2px solid #3d3d3d; padding-top: 6px; }
.igroup button { width: 44px; height: 28px; margin-top: 8px; padding-right: 2px; }
.igroup:first-child { height: 104px; }
.igroup:first-child button + button { margin-top: 15px; }
.igroup.tall { height: 226px; }
.igroup .on { height: 44px; margin-top: 6px; background: #383838; border: 2px solid #666; border-radius: 6px; }
.panels { flex: 1; min-width: 0; display: flex; flex-direction: column; gap: 3px; }
.panel { flex: 1 1 0; min-height: 0; display: flex; flex-direction: column; background: #535353; }
.tabs { height: 43px; flex: none; display: flex; background: linear-gradient(#424242 41px, #3a3a3a 41px); position: relative; font-weight: 700; font-size: 14px; }
.tabs > button { height: 41px; padding: 0 12px 4px 13px; color: #a0a0a0; border-right: 2px solid #393939; }
.tabs > .on { height: 43px; padding: 0 12px 6px 14px; background: #535353; color: #f2f2f2; }
.burger { position: absolute; right: 8px; top: 16px; color: #bbb; }
.kindrow { height: 51px; flex: none; display: flex; align-items: center; gap: 9px; padding-left: 16px; border-bottom: 2px solid #3d3d3d; color: #cfcfcf; }
.kicon { width: 34px; height: 34px; display: flex; align-items: center; justify-content: center; background: #343434; border: 1px solid #626262; border-radius: 4px; color: #dedede; }
.props { flex: 1; min-height: 0; display: flex; }
.propmain { flex: 1; }
.ptrack { width: 24px; height: 578px; background: #4a4a4a; }
.ptrack.full { height: 100%; background: #494949; }
.sec { border-bottom: 2px solid #3d3d3d; padding-top: 12px; }
.sec.first { padding-top: 10px; }
.sec.last { border: 0; }
h3 { display: flex; align-items: center; gap: 11px; margin: 0; padding-left: 11px; height: 22px; font-size: 15px; font-weight: 700; color: #f2f2f2; }
h3 svg { color: #bbb; }
.xform { display: grid; grid-template-columns: 30px 22px 74px 37px 74px; grid-template-rows: 26px 26px 36px; gap: 12px 10px; padding: 12px 0 16px 16px; align-items: center; color: #888; }
.xform label { text-align: right; }
.xform > input { width: 100%; height: 26px; padding: 0 4px; }
.xform input { color: #757575; border-color: #5d5d5d; }
.xform .lk { grid-row: 1 / 3; justify-self: center; color: #999; }
.ang { grid-column: 2; grid-row: 3; justify-self: end; color: #c8c8c8; }
.flips { grid-column: 4 / 6; grid-row: 3; display: flex; align-items: center; gap: 20px; padding-left: 46px; color: #a8a8a8; }
.combo { display: flex; align-items: center; position: relative; width: 70px; height: 25px; border: 1px solid #636363; border-radius: 4px; background: #454545; color: #efefef; flex: none; }
.combo input { width: 46px; height: 100%; padding: 0 0 0 4px; border: 0; border-right: 1px solid #636363; background: none; }
.combo svg { margin-left: 6px; color: #bbb; }
.combo.off { width: 75px; height: 24px; border-color: #5d5d5d; background: #4a4a4a; grid-row: 3; grid-column: 3; }
.off input { width: 51px; background: #454545; }
.off svg { color: #666; }
.alabel { margin: 10px 0 20px 16px; height: 22px; line-height: 22px; color: #cfcfcf; }
.arow { display: flex; padding-left: 10px; height: 22px; color: #989898; }
.arow button { width: 43px; }
.arow .gap { margin-left: 27px; }
.adots { margin-top: 25px; height: 29px; padding: 7px 0 0 266px; }
.qa { display: flex; flex-direction: column; align-items: center; width: 279px; margin: 14px 0 0 14px; }
.qa button { width: 100%; height: 32px; margin-bottom: 11px; background: #454545; border: 1px solid #606060; border-radius: 4px; color: #efefef; }
.qa a { margin-top: 6px; line-height: 22px; color: #cfcfcf; text-underline-offset: 3px; }

.lrow { flex: none; display: flex; align-items: center; border-bottom: 2px solid #3d3d3d; padding: 0 78px 0 5px; }
.r1 { height: 49px; padding-top: 10px; }
.r1 .sel { margin-right: 8px; }
.r1 button { width: 36px; padding-bottom: 6px; }
.s-kind { width: 131px; }
.s-kind select { padding-left: 33px; }
.mag { position: absolute; left: 12px; top: 7px; width: 18px; height: 18px; }
.toggle { width: 14px; height: 28px; margin: 0 0 6px 13px; border: 1px solid #6a6a6a; border-radius: 7px; background: radial-gradient(circle at 6px 6px, #dedede 6px, #454545 7px); }
.r2 { height: 42px; }
.s-blend { width: 199px; }
.r3 { height: 44px; padding-bottom: 2px; border: 0; }
.r3 .lk { width: 45px; padding-left: 4px; color: #cfcfcf; }
.r3 button { width: 33px; }
.flab { margin: 0 6px 0 auto; color: #cfcfcf; }
.llist { flex: 1; min-height: 0; display: flex; background: #4d4d4d; }
.lmain { flex: 1; }
.layer { display: flex; height: 61px; background: #535353; border-bottom: 2px solid #464646; }
.eye { width: 46px; display: flex; align-items: center; justify-content: center; border-right: 2px solid #464646; padding-left: 4px; }
.lbody { flex: 1; display: flex; align-items: center; padding: 0 23px 0 5px; color: #f0f0f0; }
.cur .lbody { background: #696969; }
.thumb { width: 48px; height: 48px; margin-right: 14px; background: #fff; border: 1px solid #2b2b2b; }
.cur .thumb { outline: 1px solid #fff; outline-offset: 2px; }
.chkr { background: repeating-conic-gradient(#ccc 0 25%, #fff 0 50%) 0 0 / 8px 8px; }
.lko { margin-left: auto; color: #dedede; }
.lfoot { height: 39px; flex: none; display: flex; align-items: center; justify-content: flex-end; padding-right: 30px; border-top: 2px solid #3d3d3d; }
.lfoot button { position: relative; width: 41px; height: 30px; }
.lfoot .fx { font-style: italic; font-size: 19px; padding-bottom: 2px; }
.dn { position: absolute; right: 6px; bottom: 2px; border: solid transparent; border-width: 4px 3px 0; border-top-color: #fff; }
.dim { color: #8c8c8c; }

.taskbar { height: 70px; flex: none; display: grid; grid-template-columns: 1fr auto 1fr; background: #202020; color: #fff; font-family: "Noto Sans CJK KR", "Open Sans", sans-serif; font-size: 17px; border-bottom: 1px solid #111; }
.weather { display: flex; align-items: center; gap: 8px; padding: 0 0 2px 28px; }
.wicon { position: relative; width: 40px; height: 44px; padding-top: 8px; }
.wicon b { position: absolute; left: 17px; top: 0; width: 24px; height: 24px; border-radius: 50%; background: #ff99a4; color: #222; font-weight: 400; font-size: 16px; line-height: 24px; text-align: center; }
.wtext, .clock { display: flex; flex-direction: column; line-height: 24px; }
.w2 { color: #c8c8c8; }
.apps { display: flex; align-items: center; }
.app { position: relative; width: 66px; height: 60px; }
.run::after, .sel2::after { content: ""; position: absolute; bottom: 2px; left: 28px; width: 9px; height: 5px; border-radius: 3px; background: #999; }
.sel2::before { content: ""; position: absolute; inset: 0 3px; border: 1px solid #3a3a3a; border-radius: 6px; background: #2d2d2d; }
.sel2::after { left: 21px; width: 24px; background: #ffd42a; }
.ad { position: relative; width: 33px; height: 32px; border-radius: 6px; font: 700 18px/32px "Open Sans", sans-serif; margin-bottom: 4px; }
.pill { width: 150px; height: 48px; margin: 0 5px; gap: 8px; border-radius: 24px; background: #2d2d2d; border: 1px solid #363636; }
.cbadge { position: absolute; left: 35px; top: 3px; width: 25px; height: 25px; border-radius: 50%; background: #0a5594; color: #a9cbe6; font-size: 13px; line-height: 23px; }
.tray { display: flex; align-items: center; justify-content: flex-end; padding: 0 30px 2px 0; }
.ime { width: 18px; margin: 0 27px 0 30px; font-size: 28px; line-height: 40px; font-weight: 300; text-align: center; }
.sys { display: flex; gap: 10px; align-items: center; margin-right: 26px; }
.clock { text-align: right; font-size: 18px; }
.count { width: 24px; height: 24px; margin-left: 11px; border-radius: 50%; background: #ffd42a; color: #222; font-weight: 400; font-size: 16px; line-height: 24px; text-align: center; }

.note { position: absolute; right: 539px; top: 214px; margin: 0; color: #f00; font: 700 42px/49px "Noto Sans CJK KR", sans-serif; white-space: nowrap; }
.redarrow { position: absolute; right: 754px; top: 349px; color: #f00; }

.charpanel { position: absolute; right: 490px; top: 395px; width: 325px; background: #535353; border: 2px solid #3a3a3a; border-top: 6px solid #333; box-shadow: 2px 3px 8px rgba(0, 0, 0, .3); }
.ctabs > .on { padding: 0 10px 6px 13px; }
.cctl { display: flex; align-items: center; gap: 16px; margin-left: auto; height: 38px; padding-right: 7px; color: #bbb; }
.cctl i { width: 2px; height: 15px; background: #888; }
.cbody { padding: 20px 6px 2px; }
.cfont { width: 100%; height: 24px; padding: 0 3px; border-radius: 3px; display: block; }
.cfields { position: relative; display: grid; grid-auto-rows: 26px; row-gap: 4px; margin-top: 11px; }
.cfields label { display: flex; align-items: center; }
.cfields span { width: 30px; }
.cfields input { width: 84px; height: 26px; padding: 0 4px; border-radius: 3px; }
.ccolor { position: absolute; right: 0; bottom: 0; width: 84px; height: 26px; background: #e60000; border: 1px solid #333; }
.trow { display: grid; grid-template-columns: repeat(8, 36px); margin: 10px 0 0 10px; height: 26px; font: 24px/26px "Liberation Serif", serif; color: #eee; }
.trow small { font-size: 16px; padding-top: 5px; }
.trow sup { font-size: 13px; line-height: 13px; align-self: flex-start; }
.trow sub { font-size: 13px; line-height: 13px; align-self: flex-end; }
.trow.ot { margin-top: 13px; height: 34px; font-size: 26px; }
.ot button { height: 34px; }
.ot .on { margin: 0 1px; background: #383838; border: 1px solid #484848; border-radius: 3px; }
.ot sup { font-size: 17px; line-height: 24px; }
.over { text-decoration: overline; }
.clang { display: flex; align-items: center; margin-top: 8px; }
.s-lang { width: 172px; }
.s-aa { width: 100px; }
.aa { width: 36px; text-align: center; font-size: 18px; line-height: 22px; padding-bottom: 7px; }
.aa sup { font-size: 15px; line-height: 15px; }

.ctx { position: absolute; right: 394px; top: 421px; width: 357px; padding: 2px 0 0; height: 193px; background: #f9f9f9; border: 2px solid #e2e2e2; border-radius: 5px; box-shadow: 3px 5px 12px rgba(0, 0, 0, .35); color: #000; font-size: 18px; }
.ctx button { position: relative; width: 100%; height: 35px; padding-left: 54px; justify-content: flex-start; }
.ctx svg { position: absolute; left: 17px; top: 10px; }
.ctx hr { height: 1px; margin: 4px 11px 6px; border: 0; background: #d0d0d0; }
</style>
